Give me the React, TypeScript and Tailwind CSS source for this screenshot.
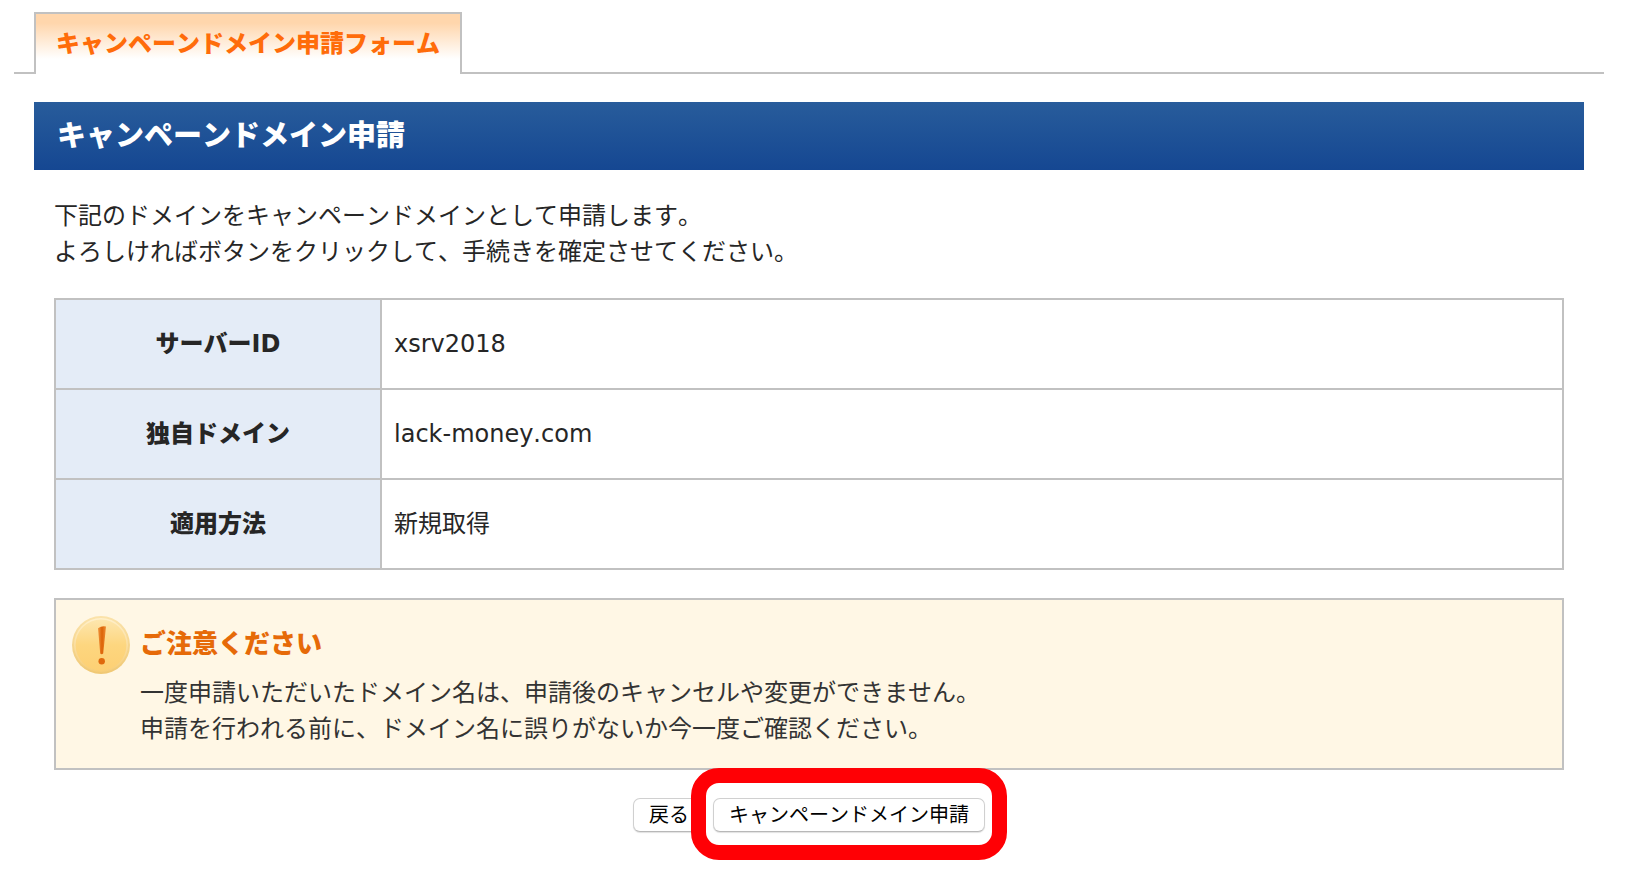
import type { ReactNode } from "react";

const ROWS = [
  { label: "サーバーID", value: "xsrv2018" },
  { label: "独自ドメイン", value: "lack-money.com" },
  { label: "適用方法", value: "新規取得" },
];

function WarningIcon() {
  return (
    <svg viewBox="0 0 58 58" className="size-[58px] shrink-0" aria-hidden="true">
      <defs>
        <linearGradient id="disc" x1="0" y1="0" x2="0" y2="1">
          <stop offset="0" stopColor="#fde6ae" />
          <stop offset="0.5" stopColor="#fdd67f" />
          <stop offset="1" stopColor="#fdd074" />
        </linearGradient>
        <linearGradient id="rim" x1="0" y1="0" x2="0" y2="1">
          <stop offset="0" stopColor="#fbe3ab" />
          <stop offset="1" stopColor="#f0c873" />
        </linearGradient>
        <linearGradient id="ring" x1="0" y1="0" x2="0" y2="1">
          <stop offset="0" stopColor="#fff0cb" />
          <stop offset="1" stopColor="#f6cd78" />
        </linearGradient>
        <linearGradient id="mark" x1="0" y1="0" x2="1" y2="0">
          <stop offset="0" stopColor="#f0973f" />
          <stop offset="0.5" stopColor="#dc6205" />
          <stop offset="1" stopColor="#ee8d35" />
        </linearGradient>
      </defs>
      <circle cx="29" cy="29" r="29" fill="url(#rim)" />
      <circle cx="29" cy="29" r="27" fill="url(#ring)" />
      <circle cx="29" cy="29" r="25.4" fill="url(#disc)" />
      <path d="M26 12.2 Q30 9.6 34 10.6 L31.2 37.5 Q29.6 39 28.2 37.5 Z" fill="url(#mark)" />
      <circle cx="29.7" cy="45.2" r="3.2" fill="#e0690c" />
    </svg>
  );
}

function FormButton({ type, children }: { type: "button" | "submit"; children: ReactNode }) {
  return (
    <button
      type={type}
      className="h-[34px] rounded-[7px] border border-[#d0d0d0] border-b-[#b8b8b8] bg-white px-[15px] text-xl leading-8 text-black shadow-[0_1px_1px_rgba(0,0,0,0.12)]"
    >
      {children}
    </button>
  );
}

export default function App() {
  return (
    <div className="bg-white pt-3 pr-[22px] pb-10 pl-3.5 font-['DejaVu_Sans','Noto_Sans_CJK_JP',sans-serif] text-2xl leading-9 text-[#262626] [font-kerning:none]">
      {/* タブ */}
      <div className="flex items-stretch">
        <div className="w-5 border-b-2 border-[#c1c1c1]" />
        <a
          href="#form"
          className="border-x-2 border-t-2 border-[#c1c1c1] bg-linear-to-b from-[#ffd6ac] from-15% to-white to-75% px-5 pt-3 pb-3 font-black text-[#ff6c0a]"
        >
          キャンペーンドメイン申請フォーム
        </a>
        <div className="flex-1 border-b-2 border-[#c1c1c1]" />
      </div>

      <main id="form" className="mt-7 mr-5 ml-5">
        <h1 className="bg-linear-to-b from-[#285c9b] to-[#154792] px-[23px] py-4 text-[29px] leading-9 font-black text-white">
          キャンペーンドメイン申請
        </h1>

        <form className="px-5 pt-7" onSubmit={(e) => e.preventDefault()}>
          <p>
            下記のドメインをキャンペーンドメインとして申請します。
            <br />
            よろしければボタンをクリックして、手続きを確定させてください。
          </p>

          <table className="mt-7 w-full border-collapse">
            <tbody>
              {ROWS.map((row) => (
                <tr key={row.label}>
                  <th
                    scope="row"
                    className="w-[326px] border-2 border-[#c1c1c1] bg-[#e4ecf7] px-3 py-[26px] text-center font-black"
                  >
                    {row.label}
                  </th>
                  <td className="border-2 border-[#c1c1c1] px-3 py-[26px]">{row.value}</td>
                </tr>
              ))}
            </tbody>
          </table>

          {/* 注意書き */}
          <section className="mt-7 flex gap-2.5 border-2 border-[#c1c1c1] bg-[#fff7e5] px-4 pt-4 pb-[21px]">
            <WarningIcon />
            <div className="pt-2.5">
              <h2 className="text-[26px] leading-9 font-black text-[#e66a08]">ご注意ください</h2>
              <p className="mt-[13px] text-[#333333]">
                一度申請いただいたドメイン名は、申請後のキャンセルや変更ができません。
                <br />
                申請を行われる前に、ドメイン名に誤りがないか今一度ご確認ください。
              </p>
            </div>
          </section>

          <div className="mt-7 flex justify-center gap-2">
            <FormButton type="button">戻る</FormButton>
            <div className="relative flex">
              <FormButton type="submit">キャンペーンドメイン申請</FormButton>
              {/* 赤枠の強調 */}
              <div className="pointer-events-none absolute -inset-x-[22px] -top-[30px] -bottom-7 rounded-[28px] border-[15px] border-[#ff0005]" />
            </div>
          </div>
        </form>
      </main>
    </div>
  );
}
